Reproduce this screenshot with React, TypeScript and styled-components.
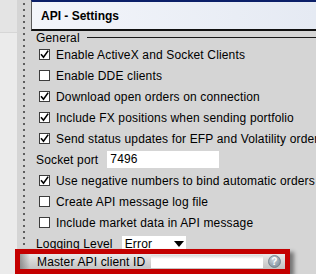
import styled, { createGlobalStyle } from "styled-components";

const Global = createGlobalStyle`
  html, body {
    margin: 0;
    padding: 0;
    overflow: hidden;
  }
  body {
    font-family: "Liberation Sans", Arial, sans-serif;
    font-size: 12px;
    letter-spacing: 0.15px;
    color: #000;
  }
`;

type Option = { label: string; checked: boolean };

const topOptions: Option[] = [
  { label: "Enable ActiveX and Socket Clients", checked: true },
  { label: "Enable DDE clients", checked: false },
  { label: "Download open orders on connection", checked: true },
  { label: "Include FX positions when sending portfolio", checked: true },
  { label: "Send status updates for EFP and Volatility orders with \"Continuous Update\" field", checked: true },
];

const bottomOptions: Option[] = [
  { label: "Use negative numbers to bind automatic orders", checked: true },
  { label: "Create API message log file", checked: false },
  { label: "Include market data in API message", checked: false },
];

function Check({ checked }: { checked: boolean }) {
  return (
    <Box>
      {checked && (
        <svg width="9" height="9" viewBox="0 0 9 9">
          <path d="M1 4.3 L3.5 7.3 L8.2 0.6" fill="none" stroke="#000" strokeWidth="1.6" />
        </svg>
      )}
    </Box>
  );
}

function CheckRow({ label, checked }: Option) {
  return (
    <Row $indent={8}>
      <Check checked={checked} />
      <Label>{label}</Label>
    </Row>
  );
}

export default function App() {
  return (
    <>
      <Global />
      <Screen>
        <LeftPane />
        <Splitter />
        <Main>
          <Header>API - Settings</Header>
          <Body>
            <Group>
              <span>General</span>
              <Rule />
            </Group>
            {topOptions.map((o) => (
              <CheckRow key={o.label} {...o} />
            ))}
            <Row $indent={5}>
              <Label>Socket port</Label>
              <PortInput>7496</PortInput>
            </Row>
            {bottomOptions.map((o) => (
              <CheckRow key={o.label} {...o} />
            ))}
            <Row $indent={5}>
              <Label>Logging Level</Label>
              <Select>
                <span>Error</span>
                <Caret />
              </Select>
            </Row>
          </Body>
        </Main>

        {/* red annotation around the master client id row */}
        <Callout>
          <CalloutLabel>Master API client ID</CalloutLabel>
          <ClientInput />
          <Help>
            <svg width="13" height="13" viewBox="0 0 13 13">
              <defs>
                <radialGradient id="hg" cx="40%" cy="35%" r="70%">
                  <stop offset="0" stopColor="#c9d3dc" />
                  <stop offset="1" stopColor="#7f8e9b" />
                </radialGradient>
              </defs>
              <circle cx="6.5" cy="6.5" r="6" fill="url(#hg)" stroke="#6f7c88" strokeWidth="0.8" />
              <text x="6.5" y="10" textAnchor="middle" fontSize="10" fontWeight="700" fill="#fff" fontFamily="Liberation Sans, Arial, sans-serif">?</text>
            </svg>
          </Help>
        </Callout>
      </Screen>
    </>
  );
}

/* styles */
const Screen = styled.div`
  position: relative;
  display: flex;
  width: 316px;
  height: 274px;
  overflow: hidden;
  background: #d5d5d5;
`;

const LeftPane = styled.div`
  width: 17px;
  flex-shrink: 0;
  background: linear-gradient(#e4e4e4 0 32px, #d6d6d6 32px 33px, #ebebeb 33px);
`;

const Splitter = styled.div`
  width: 14px;
  flex-shrink: 0;
  background-color: #d5d5d5;
  background-image: radial-gradient(circle, #5e5e5e 1px, transparent 1.4px);
  background-size: 14px 6px;
  background-position: 0 1px;
`;

const Main = styled.div`
  flex: 1;
  min-width: 0;
  display: flex;
  flex-direction: column;
`;

const Header = styled.div`
  height: 26px;
  display: flex;
  align-items: center;
  padding-left: 9px;
  padding-top: 1px;
  box-sizing: content-box;
  border-top: 2px solid #0b1f68;
  border-bottom: 2px solid #111;
  border-left: 1px solid #5a5a5a;
  background: linear-gradient(90deg, #f3f5fa, #e5eaf3);
  font-weight: 700;
  font-size: 12px;
  letter-spacing: 0;
  white-space: nowrap;
`;

const Body = styled.div`
  display: flex;
  flex-direction: column;
`;

const Group = styled.div`
  height: 13px;
  display: flex;
  align-items: center;
  padding-left: 5px;
  white-space: nowrap;
`;

const Rule = styled.div`
  flex: 1;
  height: 1px;
  margin-left: 7px;
  background: #1a1a1a;
`;

const Row = styled.div<{ $indent: number }>`
  height: 21px;
  display: flex;
  align-items: center;
  padding-left: ${(p) => p.$indent}px;
  white-space: nowrap;
`;

const Box = styled.span`
  width: 11px;
  height: 11px;
  box-sizing: border-box;
  flex-shrink: 0;
  display: flex;
  align-items: center;
  justify-content: center;
  background: #fff;
  border: 1px solid #3c3c3c;
  margin-right: 6px;
`;

const Label = styled.span`
  line-height: 14px;
`;

const PortInput = styled.div`
  margin-left: 9px;
  width: 112px;
  height: 17px;
  box-sizing: border-box;
  padding: 1px 3px;
  line-height: 15px;
  background: #fff;
`;

const Select = styled.div`
  margin-left: 9px;
  width: 64px;
  height: 16px;
  box-sizing: border-box;
  padding: 0 2px 0 3px;
  display: flex;
  align-items: center;
  justify-content: space-between;
  background: #fff;
`;

const Caret = styled.span`
  width: 0;
  height: 0;
  border-left: 5px solid transparent;
  border-right: 5px solid transparent;
  border-top: 6px solid #000;
`;

const Callout = styled.div`
  position: absolute;
  left: 15px;
  top: 249px;
  width: 275px;
  height: 25px;
  box-sizing: border-box;
  border: 5px solid #c40000;
  box-shadow: 4px 3px 4px rgba(0, 0, 0, 0.45);
  display: flex;
  align-items: center;
  background:
    linear-gradient(90deg, rgba(90, 90, 90, 0.55), rgba(90, 90, 90, 0) 10px),
    linear-gradient(#e9e9e9, #c2c2c2);
`;

const CalloutLabel = styled.span`
  width: 114px;
  padding-left: 17px;
  flex-shrink: 0;
  white-space: nowrap;
  line-height: 14px;
`;

const ClientInput = styled.div`
  width: 112px;
  height: 13px;
  flex-shrink: 0;
  background: linear-gradient(#d8d8d8, #fff 4px);
`;

const Help = styled.div`
  flex: 1;
  display: flex;
  justify-content: center;
  align-items: center;
  padding-left: 1px;
`;
